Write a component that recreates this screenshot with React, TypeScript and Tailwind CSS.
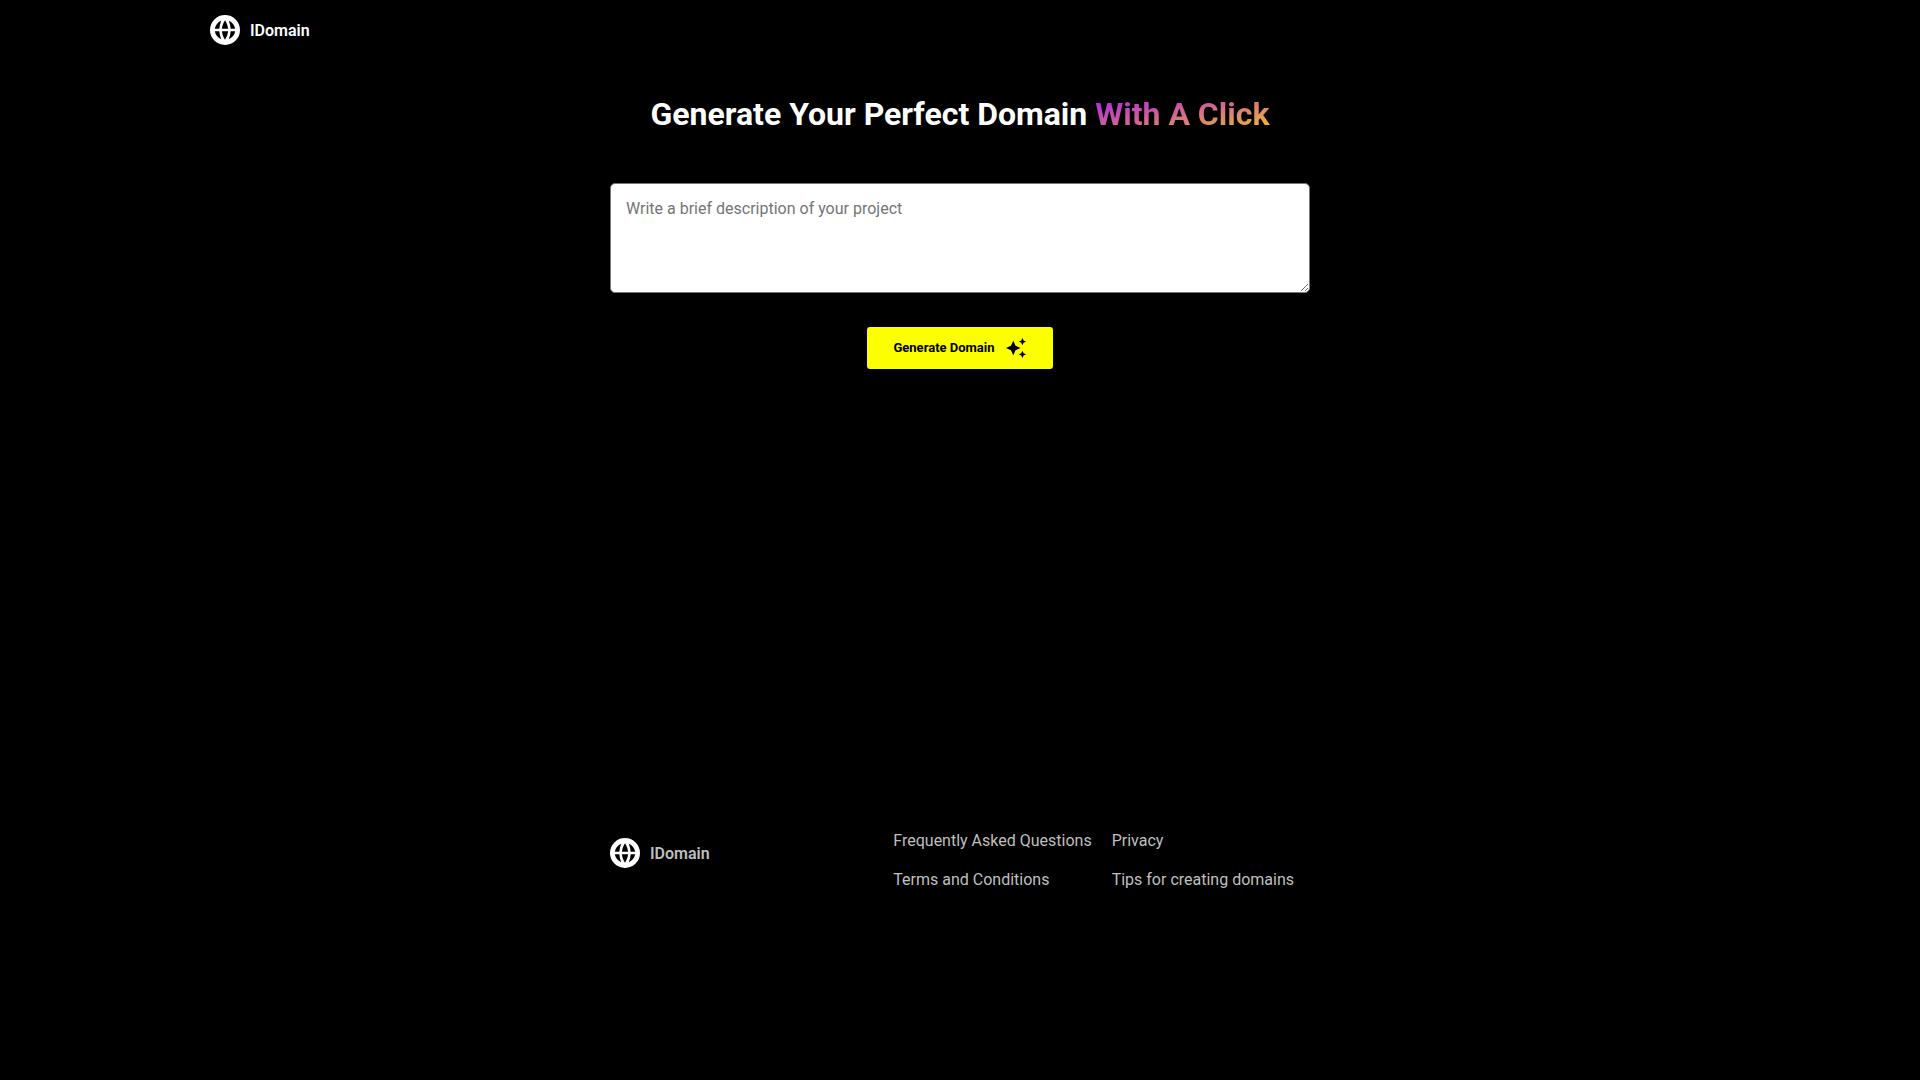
import { MdAutoAwesome } from "react-icons/md";

const links = [
  "Frequently Asked Questions",
  "Privacy",
  "Terms and Conditions",
  "Tips for creating domains",
];

function Logo({ textClass }: { textClass: string }) {
  return (
    <a href="#" className={`flex items-center gap-[10px] leading-[19px] font-semibold ${textClass}`}>
      <svg viewBox="0 0 30 30" className="size-[30px]" aria-hidden="true">
        <circle cx="15" cy="15" r="15" fill="#fff" />
        <path
          fill="#000"
          d="M15 5.2C16.6 7.6 17.8 10.6 18.1 13.7H11.9C12.2 10.6 13.4 7.6 15 5.2Z
             M15 24.8C16.6 22.4 17.8 19.4 18.1 16.3H11.9C12.2 19.4 13.4 22.4 15 24.8Z
             M4.8 13.7C5.4 10.2 7.8 7.2 11.2 5.8C10.2 8.4 9.5 11 9.3 13.7Z
             M4.8 16.3C5.4 19.8 7.8 22.8 11.2 24.2C10.2 21.6 9.5 19 9.3 16.3Z
             M25.2 13.7C24.6 10.2 22.2 7.2 18.8 5.8C19.8 8.4 20.5 11 20.7 13.7Z
             M25.2 16.3C24.6 19.8 22.2 22.8 18.8 24.2C19.8 21.6 20.5 19 20.7 16.3Z"
        />
      </svg>
      <span>IDomain</span>
    </a>
  );
}

export default function App() {
  return (
    <div className="min-h-screen bg-black font-['Roboto',sans-serif] text-base text-white">
      <header className="mx-auto flex h-[60px] max-w-[1500px] items-center">
        <Logo textClass="text-white" />
      </header>
      <main className="mx-auto flex min-h-[70vh] max-w-[700px] flex-col items-center pt-[34px]">
        <h1 className="text-center text-[32px] leading-10 font-bold">
          Generate Your Perfect Domain{" "}
          <span className="bg-linear-to-br/srgb from-[#a81ff0] via-[#d36a8c] to-[#f5c81e] bg-clip-text text-transparent">
            With A Click
          </span>
        </h1>
        <textarea
          aria-label="Project description"
          placeholder="Write a brief description of your project"
          className="mt-[49px] block h-[110px] w-full rounded-[5px] border border-[#767676] bg-white p-[15px] leading-[19px] text-black placeholder:text-[#757575]"
        />
        <button
          type="button"
          className="mt-[34px] flex h-[42px] items-center gap-[10px] rounded-[3px] bg-[#fbff00] px-[26px] text-[13px] font-bold text-black"
        >
          Generate Domain
          <MdAutoAwesome className="size-[22px]" aria-hidden="true" />
        </button>
      </main>
      <footer className="mx-auto flex max-w-[700px] items-start justify-between pt-[15px] leading-[19px] text-[#bfbfbf]">
        <div className="pt-[7px]">
          <Logo textClass="text-[#bfbfbf]" />
        </div>
        <nav className="grid grid-cols-2 gap-5">
          {links.map((label) => (
            <a key={label} href="#">
              {label}
            </a>
          ))}
        </nav>
      </footer>
    </div>
  );
}
